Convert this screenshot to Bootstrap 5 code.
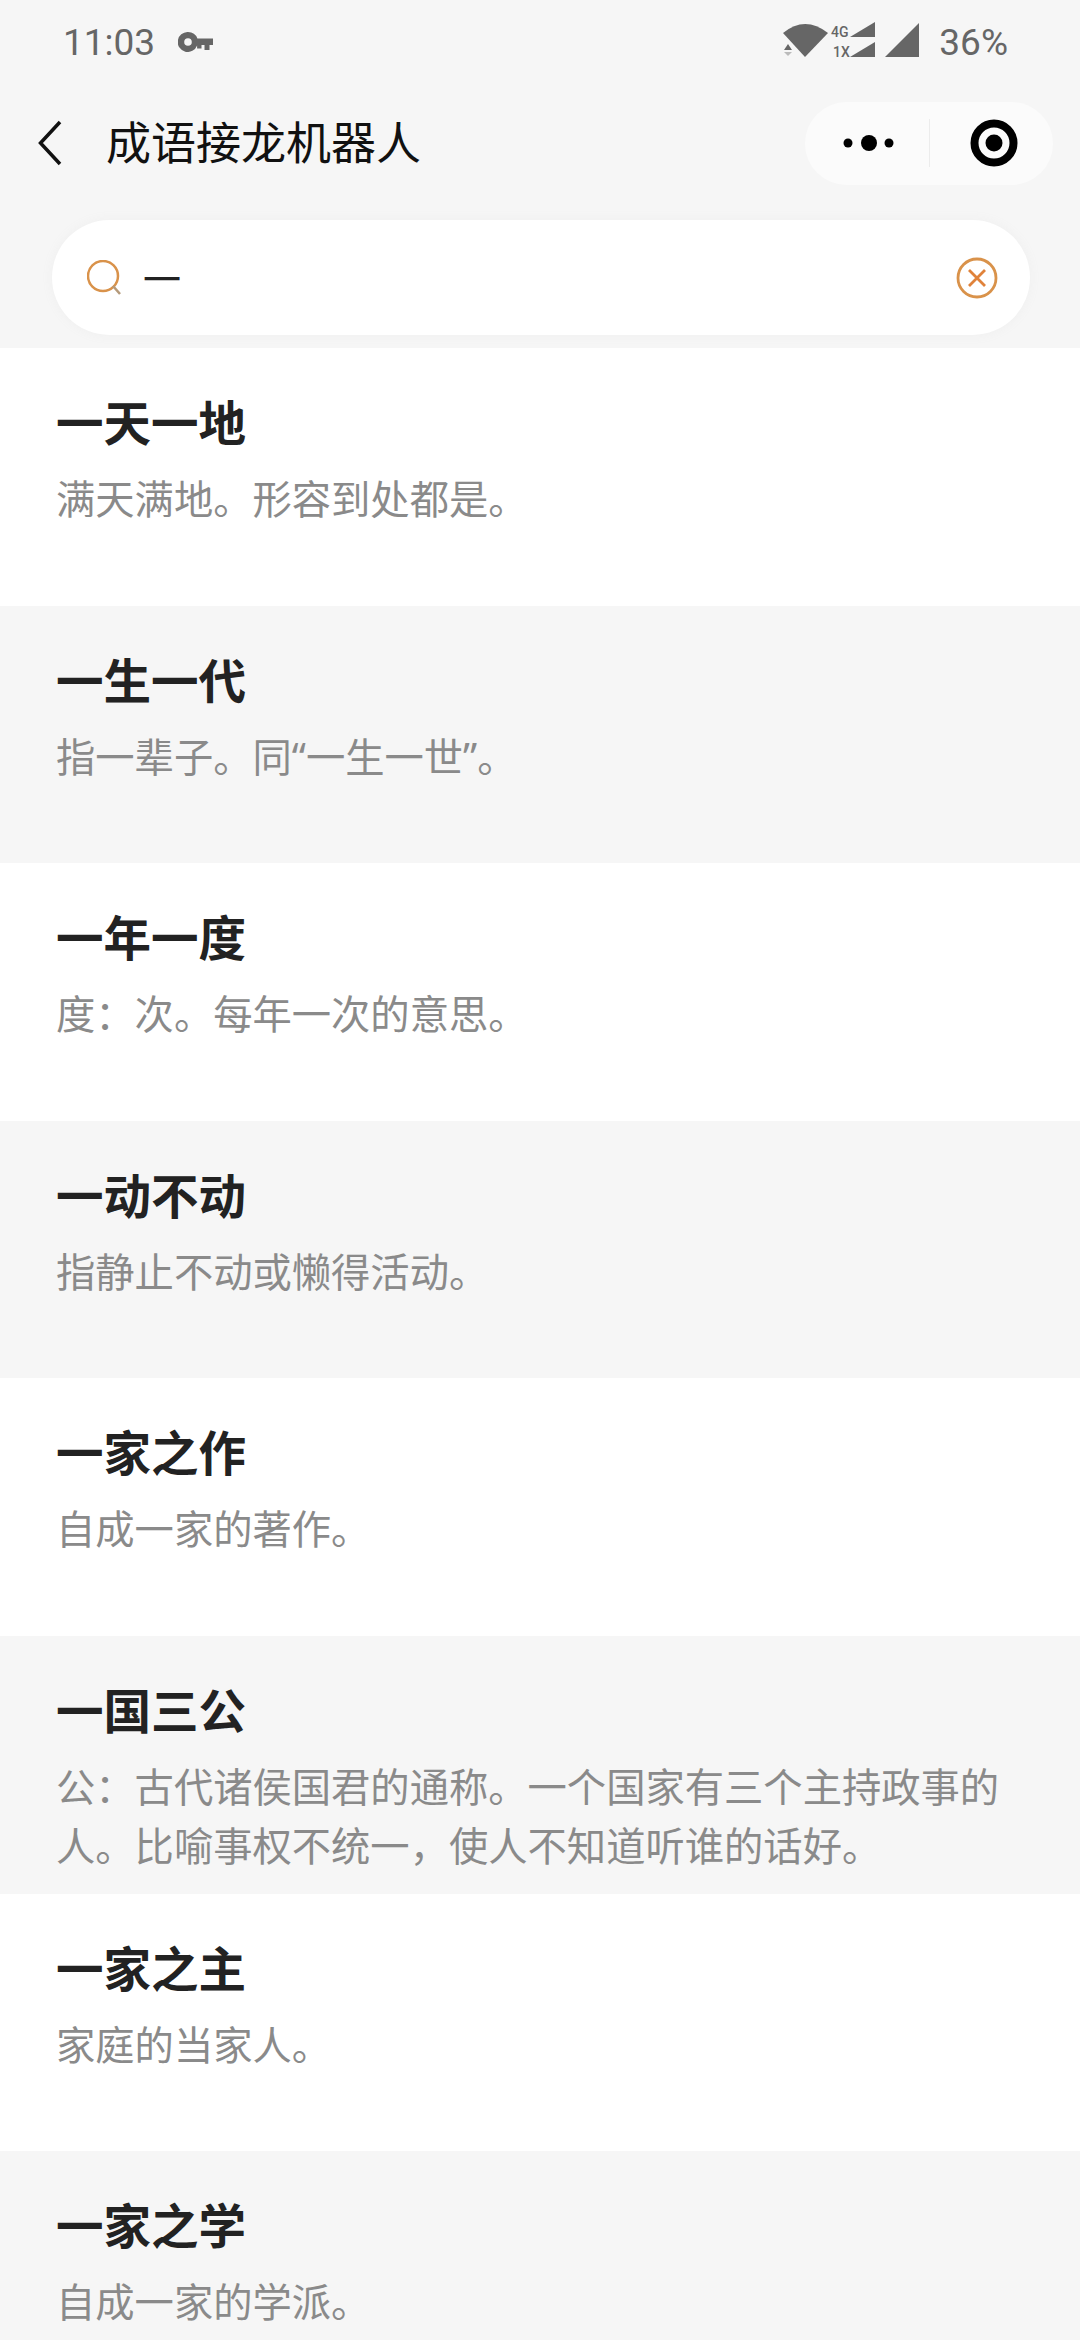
<!DOCTYPE html>
<html lang="zh-CN">
<head>
<meta charset="utf-8">
<title>成语接龙机器人</title>
<link href="https://cdn.jsdelivr.net/npm/bootstrap@5.3.0/dist/css/bootstrap.min.css" rel="stylesheet">
<style>
html,body{background:#f6f6f6;}
body{font-family:"Noto Sans","Noto Sans CJK SC",sans-serif;}
.phone{height:2340px;width:1080px;background:#f6f6f6;}
.statusbar{height:84px;padding:0 72px 0 63px;color:#666;font-family:Roboto,sans-serif;font-size:37px;line-height:1;}
.statusbar .net{font-size:14px;font-weight:500;fill:#666;font-family:Roboto,sans-serif;}
.keyicon{margin-left:23px;}
.navline{height:100px;padding:18px 27px 0 38px;}
.navtitle{font-size:45px;line-height:60px;color:#111;margin-left:44px;}
.capsule{width:248px;height:83px;background:#fbfbfb;border-radius:42px;}
.capleft{width:125px;height:48px;border-right:1px solid #ececec;padding-right:33px;}
.capright{padding-left:5px;}
.searchwrap{height:164px;padding:36px 50px 13px 52px;}
.searchpill{height:115px;background:#fff;border-radius:58px;padding:0 32px 0 35px;box-shadow:0 0 10px 2px #f1f1f1;}
.searchword{font-size:38px;line-height:1;color:#222;margin-left:20px;}
.idiomlist{border-radius:0;background:transparent;}
.idiomlist .list-group-item{height:257.6px;padding:43px 50px 0 56px;border:0;background:#fff;overflow:hidden;}
.idiomlist .list-group-item:nth-child(even){background:#f6f6f6;}
.idiomname{font-size:47.5px;line-height:64px;font-weight:700;color:#222;margin:0;}
.idiommean{font-size:39.3px;line-height:59px;color:#8a8a8a;margin:15px 0 0;}
</style>
</head>
<body>
<div class="phone overflow-hidden">
  <div class="statusbar d-flex align-items-center justify-content-between">
    <div class="d-flex align-items-center">
      <span>11:03</span>
      <svg class="keyicon" width="36" height="20" viewBox="0 0 36 20" aria-hidden="true"><path fill="#666" fill-rule="evenodd" d="M10 0a10 10 0 0 1 9.400 6.500H35v6.500h-3.500v5h-5v-5h-3v3.500h-4.400V13.500A10 10 0 1 1 10 0zm0 6.200a3.800 3.800 0 1 0 0 7.600 3.800 3.800 0 0 0 0-7.600z"/></svg>
    </div>
    <div class="d-flex align-items-center">
      <svg width="142" height="40" viewBox="0 0 142 40" aria-hidden="true">
        <path fill="#666" d="M2 11Q24-7 47 11L24 35z"/>
        <path fill="#666" d="M7 22l-4 6h8z"/>
        <path fill="#bbb" d="M3 30h8l-4 4z"/>
        <text class="net" x="50" y="15">4G</text>
        <text class="net" x="52" y="35">1X</text>
        <path fill="#666" d="M69 15 94 0v15z"/>
        <path fill="#666" d="M69 35 94 20v15z"/>
        <path fill="#666" d="M104 35 138 1v34z"/>
      </svg>
      <span class="ms-3">36%</span>
    </div>
  </div>
  <div class="navline d-flex align-items-center justify-content-between">
    <div class="d-flex align-items-center">
      <svg width="24" height="46" viewBox="0 0 24 46" aria-hidden="true"><path d="M22 2 2.500 23 22 44" fill="none" stroke="#111" stroke-width="3.500"/></svg>
      <span class="navtitle">成语接龙机器人</span>
    </div>
    <div class="capsule d-flex align-items-center">
      <div class="capleft d-flex align-items-center justify-content-end">
        <svg width="54" height="20" viewBox="0 0 54 20" aria-hidden="true"><circle cx="6" cy="10" r="4.500"/><circle cx="27" cy="10" r="8"/><circle cx="47" cy="10" r="4.500"/></svg>
      </div>
      <div class="capright flex-grow-1 d-flex justify-content-center">
        <svg width="48" height="48" viewBox="0 0 48 48" aria-hidden="true"><circle cx="24" cy="24" r="19.500" fill="none" stroke="#000" stroke-width="8"/><circle cx="24" cy="24" r="8.500"/></svg>
      </div>
    </div>
  </div>
  <div class="searchwrap">
    <div class="searchpill d-flex align-items-center">
      <svg width="36" height="36" viewBox="0 0 36 36" aria-hidden="true"><circle cx="16" cy="16" r="15" fill="none" stroke="#d9924a" stroke-width="2.500"/><path d="M26 26l7 8" stroke="#b59a7a" stroke-width="2.500" fill="none"/></svg>
      <span class="searchword flex-grow-1">一</span>
      <svg width="42" height="42" viewBox="0 0 42 42" aria-hidden="true"><circle cx="21" cy="21" r="19" fill="none" stroke="#d9924a" stroke-width="2.800"/><path d="M13 13l16 16M29 13 13 29" stroke="#e0823a" stroke-width="2.800" fill="none"/></svg>
    </div>
  </div>
  <ul class="list-group list-group-flush idiomlist">
    <li class="list-group-item"><h3 class="idiomname">一天一地</h3><p class="idiommean">满天满地。形容到处都是。</p></li>
    <li class="list-group-item"><h3 class="idiomname">一生一代</h3><p class="idiommean">指一辈子。同“一生一世”。</p></li>
    <li class="list-group-item"><h3 class="idiomname">一年一度</h3><p class="idiommean">度：次。每年一次的意思。</p></li>
    <li class="list-group-item"><h3 class="idiomname">一动不动</h3><p class="idiommean">指静止不动或懒得活动。</p></li>
    <li class="list-group-item"><h3 class="idiomname">一家之作</h3><p class="idiommean">自成一家的著作。</p></li>
    <li class="list-group-item"><h3 class="idiomname">一国三公</h3><p class="idiommean">公：古代诸侯国君的通称。一个国家有三个主持政事的人。比喻事权不统一，使人不知道听谁的话好。</p></li>
    <li class="list-group-item"><h3 class="idiomname">一家之主</h3><p class="idiommean">家庭的当家人。</p></li>
    <li class="list-group-item"><h3 class="idiomname">一家之学</h3><p class="idiommean">自成一家的学派。</p></li>
  </ul>
</div>
<script src="https://cdn.jsdelivr.net/npm/bootstrap@5.3.0/dist/js/bootstrap.bundle.min.js"></script>
</body>
</html>
